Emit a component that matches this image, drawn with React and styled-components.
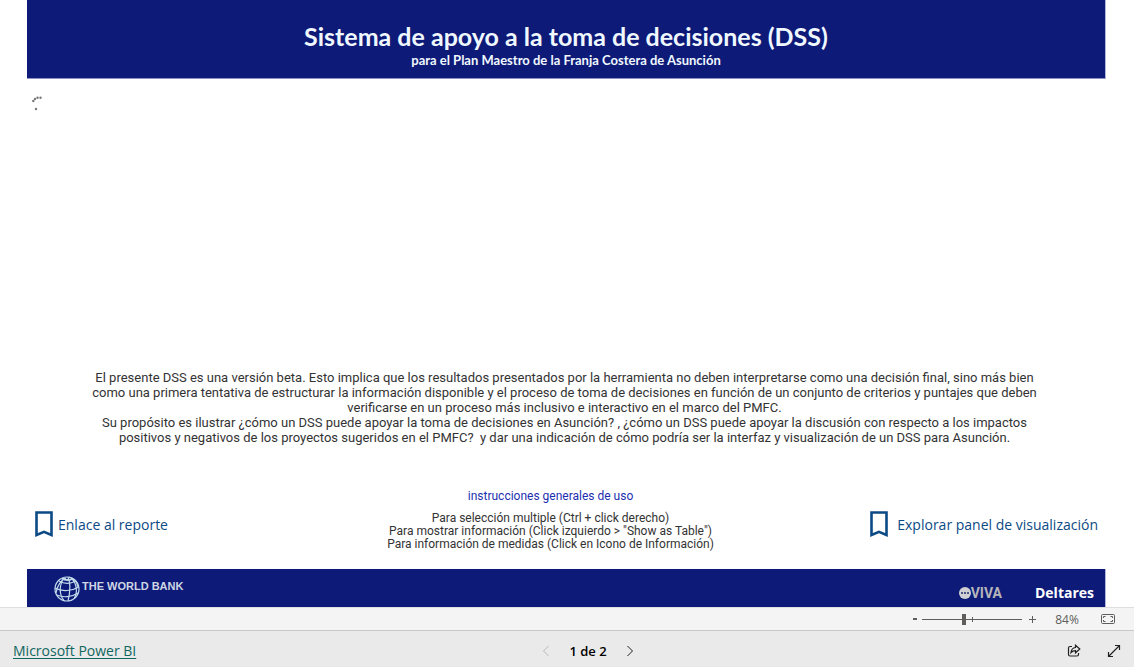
import React, { useState } from "react";
import styled, { createGlobalStyle } from "styled-components";

const Color = {
  Navy: "#0d1a78",
  Link: "#0b4a85",
  Text: "#333333",
  Gray: "#605e5c",
};

const GlobalStyle = createGlobalStyle`
  * {
    box-sizing: border-box;
  }

  body {
    margin: 0;
    background-color: #ffffff;
    font-family: "Open Sans", "Noto Sans", sans-serif;
  }

  button {
    padding: 0;
    border: none;
    background: none;
    font: inherit;
    cursor: pointer;
  }
`;

const Page = styled.div`
  min-height: 100vh;

  display: flex;
  flex-direction: column;
`;

const Report = styled.main`
  padding: 0 28px 0 27px;

  display: flex;
  flex: 1;
  flex-direction: column;
`;

const Header = styled.header`
  padding: 20px 20px 10px;

  border-right: 1px solid #b4b8d8;
  border-bottom: 1px solid #8c93c4;
  background-color: ${Color.Navy};

  color: #f0f8ff;
  font-family: Lato, sans-serif;
  text-align: center;
`;

const Title = styled.h1`
  margin: 0;

  font-size: 25px;
  font-weight: 700;
  line-height: 32px;
`;

const SubTitle = styled.p`
  margin: 0;

  font-size: 13px;
  font-weight: 700;
  line-height: 16px;
`;

const Content = styled.section`
  padding: 16px 8px 18px 4px;

  display: flex;
  flex: 1;
  flex-direction: column;
`;

const Spinner = styled.svg`
  width: 16px;
  height: 16px;

  fill: #777777;
`;

const About = styled.div`
  margin-top: auto;

  color: ${Color.Text};
  font-family: Roboto, sans-serif;
  font-size: 13px;
  line-height: 15px;
  text-align: center;

  p {
    margin: 0;
    white-space: pre-wrap;
  }
`;

const ActionRow = styled.div`
  margin-top: 45px;

  display: grid;
  grid-template-columns: 1fr auto 1fr;
  align-items: center;
`;

const BookmarkButton = styled.button`
  padding: 8px 0 0 4px;

  display: flex;
  justify-self: ${(props) => (props.$end ? "end" : "start")};
  align-items: center;
  gap: ${(props) => (props.$end ? "8px" : "4px")};

  color: ${Color.Link};
  font-size: 14px;
  line-height: 20px;

  svg {
    width: 19px;
    height: 27px;
  }
`;

const Instructions = styled.div`
  padding-right: 28px;

  color: ${Color.Text};
  font-family: Roboto, sans-serif;
  font-size: 12px;
  line-height: 13px;
  text-align: center;

  p {
    margin: 0;
  }
`;

const InstructionsTitle = styled.h2`
  margin: 0 0 9px;

  color: #1c2fb0;
  font-size: 12px;
  font-weight: 400;
  line-height: 13px;
`;

const Footer = styled.footer`
  height: 38px;
  padding: 0 11px 0 27px;

  display: flex;
  justify-content: space-between;

  border-right: 1px solid #b4b8d8;
  background-color: ${Color.Navy};
`;

const WorldBank = styled.div`
  display: flex;
  gap: 2px;

  color: #ced6e4;
  font-family: "Liberation Sans", sans-serif;
  font-size: 11px;
  font-weight: 700;
  line-height: 34px;

  svg {
    width: 26px;
    height: 38px;
  }
`;

const Partners = styled.div`
  padding-top: 10px;

  display: flex;
  align-items: center;
  gap: 33px;
`;

const Viva = styled.div`
  display: flex;
  align-items: center;

  color: #b5b5ba;
  font-family: Roboto, sans-serif;
  font-size: 14px;
  font-weight: 700;
  line-height: 20px;

  svg {
    width: 12px;
    height: 12px;
  }
`;

const Deltares = styled.div`
  color: #ffffff;
  font-size: 14px;
  font-weight: 700;
  line-height: 20px;
`;

const ZoomBar = styled.div`
  height: 23px;
  padding: 0 19px;

  display: flex;
  justify-content: flex-end;
  align-items: center;

  border-top: 1px solid #dedede;
  background-color: #f4f4f4;

  color: ${Color.Gray};
  font-size: 12px;
`;

const ZoomButton = styled.button`
  width: 10px;
  height: 20px;

  display: flex;
  justify-content: center;
  align-items: center;

  color: ${Color.Gray};
`;

const ZoomSlider = styled.input`
  width: 100px;
  height: 12px;
  margin: 0 5px 0 2px;

  appearance: none;
  background:
    linear-gradient(${Color.Gray}, ${Color.Gray}) center / 100% 1px no-repeat,
    linear-gradient(${Color.Gray}, ${Color.Gray}) center / 1px 5px no-repeat;

  &::-webkit-slider-thumb {
    width: 4px;
    height: 11px;

    appearance: none;
    background-color: ${Color.Gray};
  }
`;

const ZoomValue = styled.output`
  width: 42px;
  margin: 0 13px 0 9px;

  text-align: center;
`;

const FitButton = styled.button`
  width: 14px;
  height: 20px;

  display: flex;
  align-items: center;

  color: ${Color.Gray};
`;

const StatusBar = styled.nav`
  height: 37px;
  padding: 3px 13px 0;

  display: grid;
  grid-template-columns: 1fr auto 1fr;
  align-items: center;

  border-top: 1px solid #c8c8c8;
  background-color: #eaeaea;
`;

const BrandLink = styled.a`
  justify-self: start;

  color: #0f6660;
  font-size: 14px;
  line-height: 20px;
  text-underline-offset: 2px;
`;

const Pager = styled.div`
  padding-left: 42px;

  display: flex;
  align-items: center;
  gap: 18px;

  font-size: 13px;
  font-weight: 600;
  line-height: 20px;
`;

const IconButton = styled.button`
  display: flex;

  color: ${(props) => (props.disabled ? "#b8b8b8" : "#222222")};
`;

const Tools = styled.div`
  display: flex;
  justify-self: end;
  gap: 26px;
`;

const BookmarkIcon = () => (
  <svg viewBox="0 0 19 27" fill="none" stroke="currentColor" strokeWidth="2.6">
    <path d="M1.500 1.500h15v22.500L9 20.800l-7.500 3.200z" />
  </svg>
);

const GlobeIcon = () => (
  <svg viewBox="0 0 26 38" fill="none" stroke="#c4dcec" strokeWidth="1.2">
    <circle cx="13" cy="20" r="12" />
    <path d="M10 9C5 16 5 26 10 31.600M14 8c3 7 2 16 0 24M17 9c6 5 7 15 3 20.500M12 9C7 11 3 17 2 24M15 8c5 1 8 5 9 10" />
    <path d="M5 12c5 3 11 3 17 0M1 19c7 4 17 3 24-1M3 26c6 3 15 2 21-2" />
    <path d="M8 9.500c3 2 8 2 11 0" strokeWidth="2" />
  </svg>
);

const aboutText = [
  "El presente DSS es una versión beta. Esto implica que los resultados presentados por la herramienta no deben interpretarse como una decisión final, sino más bien",
  "como una primera tentativa de estructurar la información disponible y el proceso de toma de decisiones en función de un conjunto de criterios y puntajes que deben",
  "verificarse en un proceso más inclusivo e interactivo en el marco del PMFC.",
  "Su propósito es ilustrar ¿cómo un DSS puede apoyar la toma de decisiones en Asunción? , ¿cómo un DSS puede apoyar la discusión con respecto a los impactos",
  "positivos y negativos de los proyectos sugeridos en el PMFC?  y dar una indicación de cómo podría ser la interfaz y visualización de un DSS para Asunción.",
];

const instructions = [
  "Para selección multiple (Ctrl + click derecho)",
  'Para mostrar información (Click izquierdo > "Show as Table")',
  "Para información de medidas (Click en Icono de Información)",
];

const App = () => {
  const [zoom, setZoom] = useState(84);

  return (
    <Page>
      <GlobalStyle />
      <Report>
        <Header>
          <Title>Sistema de apoyo a la toma de decisiones (DSS)</Title>
          <SubTitle>para el Plan Maestro de la Franja Costera de Asunción</SubTitle>
        </Header>
        <Content>
          <Spinner viewBox="0 0 16 16">
            <circle cx="2.300" cy="6" r="1.200" />
            <circle cx="4" cy="4" r="1.200" />
            <circle cx="6.500" cy="2.800" r="1.200" />
            <circle cx="9.500" cy="2.800" r="1.200" />
            <circle cx="5" cy="14" r="1.200" />
          </Spinner>
          <About>
            {aboutText.map((line, index) => (
              <p key={index}>{line}</p>
            ))}
          </About>
          <ActionRow>
            <BookmarkButton>
              <BookmarkIcon />
              Enlace al reporte
            </BookmarkButton>
            <Instructions>
              <InstructionsTitle>instrucciones generales de uso</InstructionsTitle>
              {instructions.map((line, index) => (
                <p key={index}>{line}</p>
              ))}
            </Instructions>
            <BookmarkButton $end>
              <BookmarkIcon />
              Explorar panel de visualización
            </BookmarkButton>
          </ActionRow>
        </Content>
        <Footer>
          <WorldBank>
            <GlobeIcon />
            THE WORLD BANK
          </WorldBank>
          <Partners>
            <Viva>
              <svg viewBox="0 0 12 12">
                <circle cx="6" cy="6" r="6" fill="#d0d0d4" />
                <path d="M2 5h2v2H2zM5 5h2v2H5zM8 5h2v2H8z" fill="#4d5488" />
              </svg>
              VIVA
            </Viva>
            <Deltares>Deltares</Deltares>
          </Partners>
        </Footer>
      </Report>
      <ZoomBar>
        <ZoomButton aria-label="Alejar" onClick={() => setZoom(zoom - 10)}>
          <svg width="4" height="2" fill="currentColor">
            <path d="M0 0h4v2H0z" />
          </svg>
        </ZoomButton>
        <ZoomSlider
          type="range"
          aria-label="Zoom"
          min="0"
          max="200"
          value={zoom}
          onChange={(e) => setZoom(Number(e.target.value))}
        />
        <ZoomButton aria-label="Acercar" onClick={() => setZoom(zoom + 10)}>
          <svg width="7" height="7" fill="currentColor">
            <path d="M3 0h1v3h3v1H4v3H3V4H0V3h3z" />
          </svg>
        </ZoomButton>
        <ZoomValue>{zoom}%</ZoomValue>
        <FitButton aria-label="Ajustar a la página">
          <svg width="14" height="10" fill="none" stroke="currentColor">
            <rect x=".5" y=".5" width="13" height="9" rx="1" />
            <path d="M4.500 2.500h-2v1.500M9.500 2.500h2v1.500M4.500 7.500h-2V6M9.500 7.500h2V6" />
          </svg>
        </FitButton>
      </ZoomBar>
      <StatusBar>
        <BrandLink href="#">Microsoft Power BI</BrandLink>
        <Pager>
          <IconButton aria-label="Página anterior" disabled>
            <svg width="10" height="12" fill="none" stroke="currentColor">
              <path d="M7.500 1l-5 5 5 5" />
            </svg>
          </IconButton>
          <span>1 de 2</span>
          <IconButton aria-label="Página siguiente">
            <svg width="10" height="12" fill="none" stroke="currentColor">
              <path d="M2.500 1l5 5-5 5" />
            </svg>
          </IconButton>
        </Pager>
        <Tools>
          <IconButton aria-label="Compartir">
            <svg width="14" height="14" fill="none" stroke="currentColor" strokeWidth="1.2">
              <path d="M5 2.500H3a1.500 1.500 0 0 0-1.500 1.500v6.500A1.500 1.500 0 0 0 3 12h7a1.500 1.500 0 0 0 1.500-1.500V9" />
              <path d="M8.500 1.200l4.300 3.800-4.300 3.800V6.600C6.500 6.600 5.200 7.200 4 8.600c.3-3 1.800-4.800 4.500-5.100z" />
            </svg>
          </IconButton>
          <IconButton aria-label="Pantalla completa">
            <svg width="14" height="14" fill="none" stroke="currentColor" strokeWidth="1.2">
              <path d="M1.500 12.500l11-11M8 1.500h4.500V6M1.500 8v4.500H6" />
            </svg>
          </IconButton>
        </Tools>
      </StatusBar>
    </Page>
  );
};

export default App;
